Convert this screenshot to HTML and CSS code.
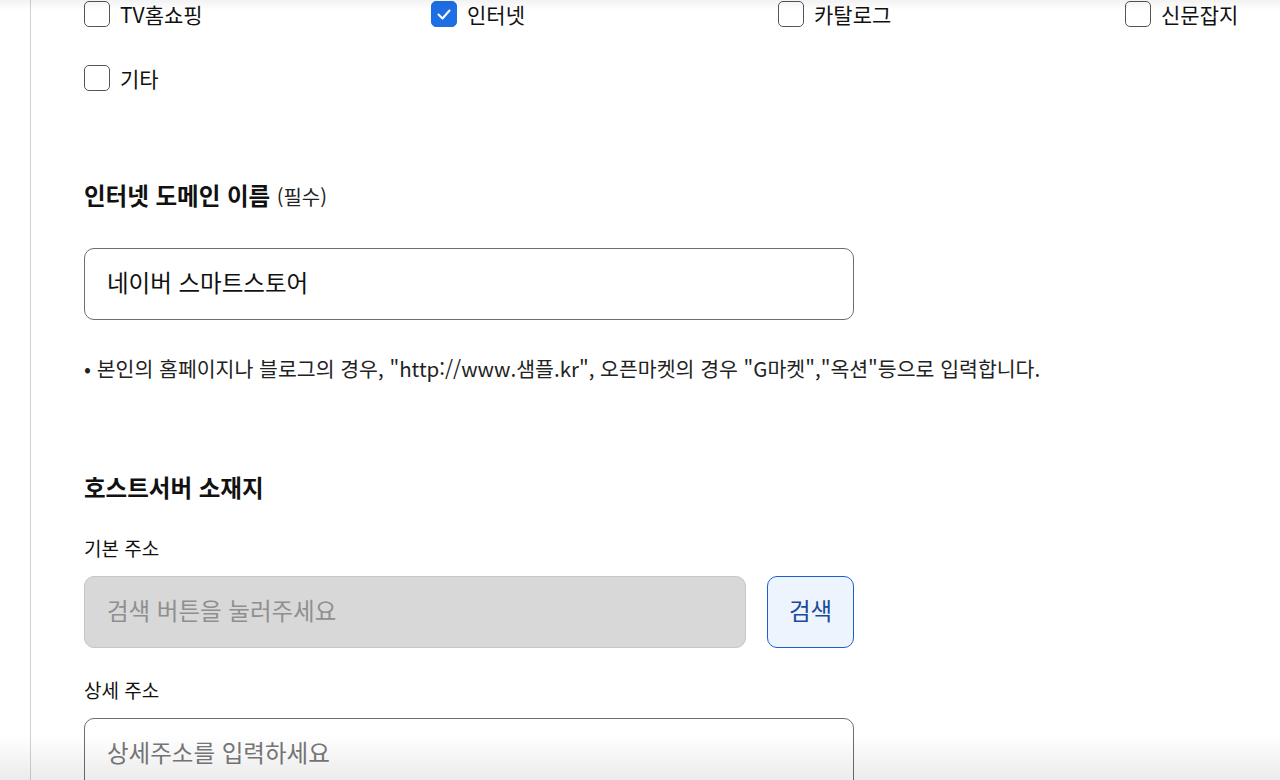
FILE: index.html
```html
<!DOCTYPE html>
<html lang="ko">
<head>
<meta charset="utf-8">
<link rel="stylesheet" href="styles.css">
</head>
<body>
<div class="page">
  <div class="form">
    <div class="options">
      <label class="opt"><span class="box"></span>TV홈쇼핑</label>
      <label class="opt"><span class="box checked"><svg viewBox="0 0 26 26" width="26" height="26"><path d="M7.5 13.5l4 4 7-8" fill="none" stroke="#fff" stroke-width="2" stroke-linecap="round" stroke-linejoin="round"/></svg></span>인터넷</label>
      <label class="opt"><span class="box"></span>카탈로그</label>
      <label class="opt"><span class="box"></span>신문잡지</label>
      <label class="opt"><span class="box"></span>기타</label>
    </div>

    <h2 class="heading first">인터넷 도메인 이름 <span class="req">(필수)</span></h2>
    <div class="field">네이버 스마트스토어</div>
    <p class="note">• 본인의 홈페이지나 블로그의 경우, "http://www.샘플.kr", 오픈마켓의 경우 "G마켓","옥션"등으로 입력합니다.</p>

    <h2 class="heading second">호스트서버 소재지</h2>
    <div class="label">기본 주소</div>
    <div class="row">
      <div class="field disabled">검색 버튼을 눌러주세요</div>
      <button class="search">검색</button>
    </div>
    <div class="label">상세 주소</div>
    <div class="field placeholder">상세주소를 입력하세요</div>
  </div>
</div>
<div class="shade-top"></div>
<div class="shade-bottom"></div>
</body>
</html>
```

FILE: styles.css
```css
html, body {
  margin: 0;
  padding: 0;
  background: #fff;
  height: 780px;
  overflow: hidden;
}
body {
  font-family: "Noto Sans CJK KR", "Noto Sans", sans-serif;
  color: #111;
}
.page {
  margin-left: 30px;
  border-left: 1px solid #d2d2d2;
  padding-left: 53px;
  padding-top: 1px;
  min-height: 900px;
}
.form {
  width: 770px;
}
.options {
  display: grid;
  grid-template-columns: repeat(4, 347px);
  row-gap: 38px;
}
.opt {
  display: flex;
  align-items: center;
  gap: 10px;
  height: 26px;
  font-size: 21px;
  line-height: 26px;
  white-space: nowrap;
  color: #111;
}
.box {
  box-sizing: border-box;
  width: 26px;
  height: 26px;
  border: 1.5px solid #555;
  border-radius: 5px;
  background: #fff;
  flex: none;
  display: block;
}
.box svg { display: block; margin: -1.5px; }
.box.checked {
  background: #1e6fe6;
  border-color: #1e6fe6;
}
.heading {
  margin: 0;
  font-size: 23.5px;
  line-height: 30px;
  font-weight: 700;
  color: #111;
}
.heading.first { margin-top: 89px; }
.heading.second { margin-top: 91px; }
.req {
  font-size: 20px;
  font-weight: 400;
  color: #222;
}
.field {
  box-sizing: border-box;
  height: 72px;
  border: 1px solid #6e6e6e;
  border-radius: 10px;
  padding: 0 22px 4px;
  display: flex;
  align-items: center;
  font-size: 23.5px;
  color: #111;
  background: #fff;
}
.first + .field { margin-top: 36px; }
.note {
  margin: 35px 0 0;
  font-size: 20.5px;
  line-height: 26px;
  color: #222;
  white-space: nowrap;
}
.label {
  margin-top: 34px;
  font-size: 19px;
  line-height: 24px;
  color: #111;
}
.row + .label { margin-top: 30px; }
.row {
  display: flex;
  gap: 21px;
  margin-top: 16px;
}
.label + .field { margin-top: 16px; }
.field.disabled {
  flex: 1;
  background: #d8d8d8;
  border-color: #c6c6c6;
  color: #8f8f8f;
}
.field.placeholder { color: #787878; }
.search {
  box-sizing: border-box;
  width: 87px;
  height: 72px;
  border: 1px solid #1a5fcf;
  border-radius: 10px;
  background: #eef4fd;
  color: #1a4a9c;
  font-family: inherit;
  font-size: 23.5px;
  padding: 0 0 4px;
}
.shade-top {
  position: fixed;
  left: 0; right: 0; top: 0;
  height: 10px;
  background: linear-gradient(to bottom, rgba(0,0,0,0.05), rgba(0,0,0,0));
  pointer-events: none;
}
.shade-bottom {
  position: fixed;
  left: 0; right: 0; bottom: 0;
  height: 45px;
  background: linear-gradient(to bottom, rgba(0,0,0,0), rgba(0,0,0,0.08));
  pointer-events: none;
}
```
